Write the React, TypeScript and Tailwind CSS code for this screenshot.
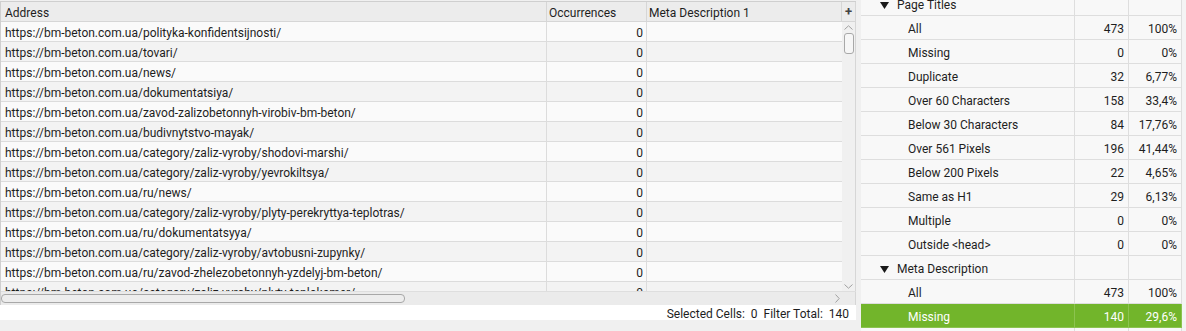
const urls = [
  'https://bm-beton.com.ua/polityka-konfidentsijnosti/',
  'https://bm-beton.com.ua/tovari/',
  'https://bm-beton.com.ua/news/',
  'https://bm-beton.com.ua/dokumentatsiya/',
  'https://bm-beton.com.ua/zavod-zalizobetonnyh-virobiv-bm-beton/',
  'https://bm-beton.com.ua/budivnytstvo-mayak/',
  'https://bm-beton.com.ua/category/zaliz-vyroby/shodovi-marshi/',
  'https://bm-beton.com.ua/category/zaliz-vyroby/yevrokiltsya/',
  'https://bm-beton.com.ua/ru/news/',
  'https://bm-beton.com.ua/category/zaliz-vyroby/plyty-perekryttya-teplotras/',
  'https://bm-beton.com.ua/ru/dokumentatsyya/',
  'https://bm-beton.com.ua/category/zaliz-vyroby/avtobusni-zupynky/',
  'https://bm-beton.com.ua/ru/zavod-zhelezobetonnyh-yzdelyj-bm-beton/',
  'https://bm-beton.com.ua/category/zaliz-vyroby/plyty-teplokamer/',
]

type Row = { label: string; count?: string; pct?: string; group?: boolean; active?: boolean }

const overview: Row[] = [
  { label: 'Page Titles', group: true },
  { label: 'All', count: '473', pct: '100%' },
  { label: 'Missing', count: '0', pct: '0%' },
  { label: 'Duplicate', count: '32', pct: '6,77%' },
  { label: 'Over 60 Characters', count: '158', pct: '33,4%' },
  { label: 'Below 30 Characters', count: '84', pct: '17,76%' },
  { label: 'Over 561 Pixels', count: '196', pct: '41,44%' },
  { label: 'Below 200 Pixels', count: '22', pct: '4,65%' },
  { label: 'Same as H1', count: '29', pct: '6,13%' },
  { label: 'Multiple', count: '0', pct: '0%' },
  { label: 'Outside <head>', count: '0', pct: '0%' },
  { label: 'Meta Description', group: true },
  { label: 'All', count: '473', pct: '100%' },
  { label: 'Missing', count: '140', pct: '29,6%', active: true },
  { label: '', count: '', pct: '' },
]

function Caret() {
  return (
    <svg width="9" height="7" viewBox="0 0 9 7" className="mr-[8px]">
      <path d="M0 0h9L4.5 7z" fill="#1a1a1a" />
    </svg>
  )
}

export default function App() {
  return (
    <div
      className="w-[1186px] h-[331px] flex overflow-hidden bg-[#f0f0f0] text-[12px] text-[#1e1e1e]"
      style={{ fontFamily: 'Roboto, "Liberation Sans", sans-serif' }}
    >
      {/* Left: results table */}
      <div className="w-[856px] flex flex-col">
        <div className="mt-[1px] border-t border-l border-[#cfcfcf] flex flex-col">
          {/* header */}
          <div className="h-[20px] flex bg-[#ececec] border-b border-[#d6d6d6] leading-[22px]">
            <div className="w-[546px] px-[4px] border-r border-[#d6d6d6]">Address</div>
            <div className="w-[100px] px-[2px] border-r border-[#d6d6d6]">Occurrences</div>
            <div className="w-[195px] px-[2px] border-r border-[#d6d6d6]">Meta Description 1</div>
            <div className="w-[14px] flex items-center justify-center text-[#444] font-bold text-[13px] border-r border-[#d6d6d6]">+</div>
          </div>

          {/* body */}
          <div className="h-[269px] flex">
            <div className="w-[841px] overflow-hidden">
              {urls.map((u, i) => (
                <div
                  key={u}
                  className={`h-[20px] flex border-b border-[#dcdcdc] leading-[23px] ${i % 2 === 0 ? 'bg-[#fafafa]' : 'bg-[#f3f3f3]'}`}
                >
                  <div className="w-[546px] px-[4px] border-r border-[#dcdcdc] whitespace-nowrap overflow-hidden">{u}</div>
                  <div className="w-[100px] px-[3px] text-right border-r border-[#dcdcdc]">0</div>
                  <div className="flex-1" />
                </div>
              ))}
            </div>
            {/* vertical scrollbar */}
            <div className="w-[14px] bg-[#f0f0f0] border-r border-[#d6d6d6] flex flex-col items-center">
              <svg width="9" height="5" viewBox="0 0 9 5" className="mt-[3px]">
                <path d="M0.5 4.5L4.5 0.8L8.5 4.5" stroke="#a0a0a0" fill="none" />
              </svg>
              <div className="mt-[3px] w-[10px] h-[21px] rounded-[3px] border border-[#a8a8a8] bg-[#f6f6f6]" />
              <div className="flex-1" />
              <svg width="9" height="5" viewBox="0 0 9 5" className="mb-[2px]">
                <path d="M0.5 0.5L4.5 4.2L8.5 0.5" stroke="#a0a0a0" fill="none" />
              </svg>
            </div>
          </div>

          {/* horizontal scrollbar */}
          <div className="h-[14px] flex bg-[#ebebeb] border-t border-[#dedede]">
            <div className="w-[841px] flex items-center">
              <div className="w-[404px] h-[9px] rounded-[4px] border border-[#a8a8a8] bg-[#ededed]" />
              <div className="flex-1" />
              <svg width="5" height="9" viewBox="0 0 5 9" className="mr-[2px]">
                <path d="M0.5 0.5L4.2 4.5L0.5 8.5" stroke="#a0a0a0" fill="none" />
              </svg>
            </div>
            <div className="w-[14px] border-r border-[#d6d6d6]" />
          </div>
        </div>

        {/* status bar */}
        <div className="h-[15px] bg-white flex justify-end pr-[7px] leading-[18px] whitespace-pre overflow-hidden">
          Selected Cells:  0  Filter Total:  140
        </div>
      </div>

      {/* Right: overview tree */}
      <div className="ml-[5px] flex-1 flex overflow-hidden">
        <div className="flex-1 flex flex-col -mt-[8px]">
          {overview.map((r, i) => (
            <div
              key={i}
              className={`h-[24px] shrink-0 flex border-b leading-[27px] ${
                r.active ? 'bg-[#72b52b] text-white border-[#8cc350]' : 'bg-[#f8f8f8] border-[#dedede]'
              }`}
            >
              <div
                className={`w-[214px] flex items-start border-r ${r.active ? 'border-[#8cc350]' : 'border-[#dedede]'} ${
                  r.group ? 'pl-[19px]' : 'pl-[47px]'
                }`}
              >
                {r.group && (
                  <span className="mt-[10px]">
                    <Caret />
                  </span>
                )}
                {r.label}
              </div>
              <div className={`w-[54px] pr-[4px] text-right border-r ${r.active ? 'border-[#8cc350]' : 'border-[#dedede]'}`}>
                {r.count}
              </div>
              <div className={`w-[53px] pr-[4px] text-right border-r ${r.active ? 'border-[#8cc350]' : 'border-[#dedede]'}`}>
                {r.pct}
              </div>
            </div>
          ))}
        </div>
        <div className="w-[4px] bg-[#f4f4f4]" />
      </div>
    </div>
  )
}
